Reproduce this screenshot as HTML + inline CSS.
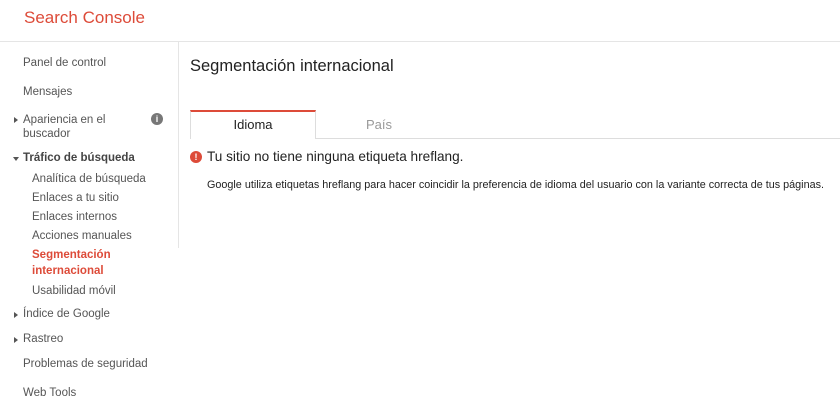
<!DOCTYPE html>
<html><head><meta charset="utf-8"><style>
*{margin:0;padding:0;box-sizing:border-box}
body{width:840px;height:411px;overflow:hidden;background:#fff;font-family:"Liberation Sans",Arial,sans-serif;position:relative;color:#222}
.a{position:absolute;white-space:nowrap}
.s{font-size:11.5px;color:#555}
.tri{position:absolute;width:0;height:0}
</style></head><body>
<div class="a" style="left:24px;top:8px;font-size:17px;color:#dd4b39">Search Console</div>
<div class="a" style="left:0;top:41px;width:840px;height:1px;background:#e5e5e5"></div>
<div class="a" style="left:178px;top:42px;width:1px;height:206px;background:#e5e5e5"></div>

<div class="a s" style="left:23px;top:57px">Panel de control</div>
<div class="a s" style="left:23px;top:86px">Mensajes</div>
<div class="tri" style="left:14px;top:117px;border-left:4px solid #555;border-top:3px solid transparent;border-bottom:3px solid transparent"></div>
<div class="a s" style="left:23px;top:114px">Apariencia en el</div>
<div class="a s" style="left:23px;top:128px">buscador</div>
<div class="a" style="left:151px;top:113px;width:12px;height:12px;border-radius:50%;background:#777;color:#fff;font-size:9px;font-weight:bold;text-align:center;line-height:12px">i</div>
<div class="tri" style="left:13px;top:157px;border-top:4px solid #555;border-left:3px solid transparent;border-right:3px solid transparent"></div>
<div class="a s" style="left:23px;top:152px;font-weight:bold;color:#444">Tráfico de búsqueda</div>
<div class="a s" style="left:32px;top:173px">Analítica de búsqueda</div>
<div class="a s" style="left:32px;top:192px">Enlaces a tu sitio</div>
<div class="a s" style="left:32px;top:211px">Enlaces internos</div>
<div class="a s" style="left:32px;top:230px">Acciones manuales</div>
<div class="a s" style="left:32px;top:249px;font-weight:bold;color:#dd4b39">Segmentación</div>
<div class="a s" style="left:32px;top:265px;font-weight:bold;color:#dd4b39">internacional</div>
<div class="a s" style="left:32px;top:285px">Usabilidad móvil</div>
<div class="tri" style="left:14px;top:312px;border-left:4px solid #555;border-top:3px solid transparent;border-bottom:3px solid transparent"></div>
<div class="a s" style="left:23px;top:308px">Índice de Google</div>
<div class="tri" style="left:14px;top:337px;border-left:4px solid #555;border-top:3px solid transparent;border-bottom:3px solid transparent"></div>
<div class="a s" style="left:23px;top:333px">Rastreo</div>
<div class="a s" style="left:23px;top:358px">Problemas de seguridad</div>
<div class="a s" style="left:23px;top:387px">Web Tools</div>

<div class="a" style="left:190px;top:57px;font-size:16.5px;color:#222">Segmentación internacional</div>

<div class="a" style="left:190px;top:110px;width:126px;height:29px;border:1px solid #ddd;border-top:2px solid #dd4b39;border-bottom:none;background:#fff"></div>
<div class="a" style="left:316px;top:138px;width:524px;height:1px;background:#ddd"></div>
<div class="a" style="left:190px;top:117px;width:126px;text-align:center;font-size:13px;color:#222">Idioma</div>
<div class="a" style="left:316px;top:117px;width:126px;text-align:center;font-size:13px;color:#999">País</div>

<div class="a" style="left:190px;top:151px;width:12px;height:12px;border-radius:50%;background:#dd4b39;color:#fff;font-size:9px;font-weight:bold;text-align:center;line-height:12px">!</div>
<div class="a" style="left:207px;top:149px;font-size:13.6px;color:#222">Tu sitio no tiene ninguna etiqueta hreflang.</div>
<div class="a" style="left:207px;top:179px;font-size:10.8px;color:#222">Google utiliza etiquetas hreflang para hacer coincidir la preferencia de idioma del usuario con la variante correcta de tus páginas.</div>
</body></html>
